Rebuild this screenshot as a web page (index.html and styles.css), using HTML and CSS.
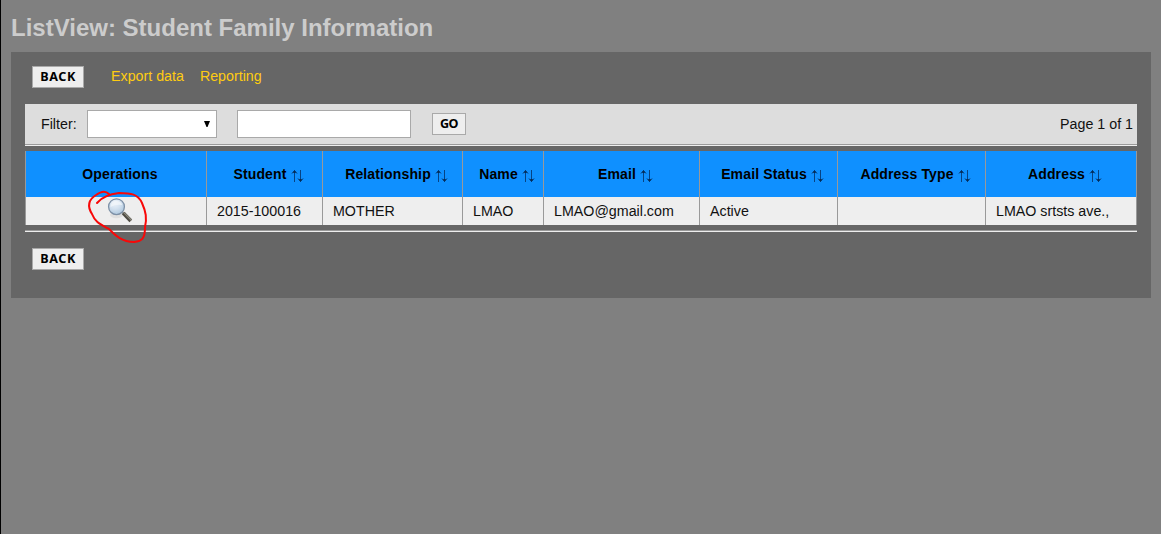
FILE: index.html
```html
<!DOCTYPE html>
<html lang="en">
<head>
<meta charset="utf-8">
<title>ListView: Student Family Information</title>
<link rel="stylesheet" href="styles.css">
</head>
<body>
<svg class="defs" width="0" height="0">
  <defs>
    <symbol id="sort" viewBox="0 0 13 14">
      <path d="M3.5 13V2M9.5 1V12" fill="none" stroke="#064384"/>
      <path d="M1 4.5L3.5 1.5L6 4.5M7 9.5L9.5 12.5L12 9.5" fill="none" stroke="#05376d"/>
      <path d="M2 4L3.5 1L5 4ZM8 10L9.5 13L11 10Z" fill="#042c58"/>
    </symbol>
    <radialGradient id="glass" cx=".4" cy=".25" r=".8">
      <stop offset="0" stop-color="#eef4fa"/><stop offset=".5" stop-color="#d2e0ee"/><stop offset="1" stop-color="#a9c4dc"/>
    </radialGradient>
  </defs>
</svg>
<h1 class="title">ListView: Student Family Information</h1>
<main class="panel">
  <nav class="actions">
    <button class="btn">BACK</button>
    <a class="link export">Export data</a>
    <a class="link">Reporting</a>
  </nav>
  <form class="filter">
    <span class="label">Filter:</span>
    <div class="select"><svg width="6" height="6" viewBox="0 0 6 6"><path d="M0 0H6L3.5 6H2.5Z"/></svg></div>
    <input class="input" type="text" aria-label="Filter value">
    <button class="btn go" type="button">GO</button>
    <span class="page">Page 1 of 1</span>
  </form>
  <div class="rule"></div>
  <section class="grid">
    <div class="head">Operations</div>
    <div class="head"><span>Student</span><svg class="sort"><use href="#sort"/></svg></div>
    <div class="head"><span>Relationship</span><svg class="sort"><use href="#sort"/></svg></div>
    <div class="head"><span>Name</span><svg class="sort"><use href="#sort"/></svg></div>
    <div class="head"><span>Email</span><svg class="sort"><use href="#sort"/></svg></div>
    <div class="head"><span>Email Status</span><svg class="sort"><use href="#sort"/></svg></div>
    <div class="head"><span>Address Type</span><svg class="sort"><use href="#sort"/></svg></div>
    <div class="head"><span>Address</span><svg class="sort"><use href="#sort"/></svg></div>
    <div class="cell view">
      <svg class="lens" width="26" height="27" viewBox="0 0 26 27">
        <ellipse cx="9.5" cy="18" rx="6.5" ry="3.3" fill="#dfdfdf"/>
        <path d="M14.5 14.5L17 17" stroke="#92989c" stroke-width="2"/>
        <path d="M16.2 16L23.8 23.8" stroke="#4d4b43" stroke-width="3.8"/>
        <path d="M16.8 15.6L24.4 23.2" stroke="#8b897d" stroke-width="1.3"/>
        <circle cx="9.5" cy="9.7" r="7.9" fill="url(#glass)" stroke="#7d90a6" stroke-width="1.3"/>
        <path d="M3.5 10Q3.7 4 9.3 3.7Q14 4 15.2 8Q9 7 3.5 10Z" fill="#f1f5f9" opacity=".75"/>
      </svg>
      <svg class="mark" width="64" height="54" viewBox="0 0 64 54"><path d="M9 13C14 7 21 4 31 3C43 3 50 4 54 13C58 22 59 28 57 37C57 49 54 51 46 52C33 52 26 44 21 39C12 34 7 32 4 24C-1 16 0 10 8 5Q16 -1 21 4" fill="none" stroke="#f80808" stroke-width="2" stroke-linecap="round"/></svg>
    </div>
    <div class="cell">2015-100016</div>
    <div class="cell">MOTHER</div>
    <div class="cell">LMAO</div>
    <div class="cell">LMAO@gmail.com</div>
    <div class="cell">Active</div>
    <div class="cell"></div>
    <div class="cell">LMAO srtsts ave.,</div>
  </section>
  <div class="rule bottom"></div>
  <button class="btn lower">BACK</button>
</main>
</body>
</html>
```
FILE: styles.css
```css
* { box-sizing: border-box; }
html { background: #808080; }
body {
  margin: 0;
  height: 534px;
  padding: 0 10px;
  border-left: 1px solid #000;
  background: #808080;
  font: 14.25px "Liberation Sans", Arial, sans-serif;
  color: #111;
  overflow: hidden;
  display: flow-root;
}
.defs { display: block; }
.title { margin: 14px 0 10px; font-size: 24px; line-height: 28px; color: #ccc; white-space: nowrap; }
.panel { width: 1140px; height: 246px; padding: 14px; background: #666; }
.actions { display: flex; height: 38px; padding-left: 7px; }
.btn {
  display: block;
  width: 52px;
  height: 22px;
  padding: 0;
  border: 1px solid #a9a9a9;
  border-radius: 0;
  background: #eee;
  color: #000;
  font: bold 12.6px/20px "Noto Sans", sans-serif;
  letter-spacing: .6px;
}
.link { margin-left: 16px; line-height: 20px; color: #fc1; }
.export { margin-left: 27px; }
.filter { display: flex; align-items: center; height: 40px; padding: 0 4px 0 16px; background: #ddd; }
.label { width: 46px; }
.select {
  display: flex;
  align-items: center;
  justify-content: flex-end;
  width: 130px;
  height: 28px;
  padding-right: 6px;
  border: 1px solid #a9a9a9;
  background: #fff;
}
.input { width: 174px; height: 28px; margin-left: 20px; border: 1px solid #a9a9a9; background: #fff; }
.go { width: 34px; margin-left: 21px; letter-spacing: -.5px; }
.page { margin-left: auto; }
.rule { height: 2px; border-top: 1px solid #9a9a9a; border-bottom: 1px solid #eee; }
.grid {
  display: grid;
  grid-template-columns: 181px 116px 140px 81px 156px 138px 148px 151px;
  grid-template-rows: 46px 28px;
  width: 1112px;
  margin: 5px 0;
  border-left: 1px solid #999;
}
.head {
  display: flex;
  align-items: center;
  justify-content: center;
  gap: 4px;
  padding-left: 8px;
  border-right: 1px solid #999;
  background: #0f90ff;
  color: #000;
  font-size: 14px;
  font-weight: bold;
  letter-spacing: .14px;
  white-space: nowrap;
}
.sort { width: 13px; height: 14px; margin-top: 3px; }
.cell { padding-left: 10px; border-right: 1px solid #999; background: #eee; line-height: 28px; }
.view { position: relative; padding-left: 81px; }
.lens { display: block; }
.mark { position: absolute; left: 62px; top: -7px; overflow: visible; }
.lower { margin: 16px 0 0 7px; }
```
